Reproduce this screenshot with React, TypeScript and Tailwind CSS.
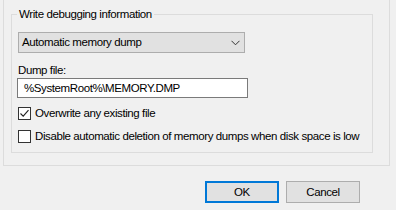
import React from 'react';

const Check = ({ checked }: { checked?: boolean }) => (
  <span className="flex h-[13px] w-[13px] shrink-0 items-center justify-center border border-[#333333] bg-white">
    {checked && (
      <svg width="11" height="11" viewBox="0 0 11 11">
        <path d="M1.5 5.5 L4.2 8.2 L9.5 2.2" fill="none" stroke="#222" strokeWidth="1.1" />
      </svg>
    )}
  </span>
);

export default function App() {
  return (
    <div className="h-[210px] w-[396px] overflow-hidden whitespace-nowrap bg-[#f0f0f0] text-[11.5px] leading-[15px] tracking-[-0.4px] text-black [font-family:'Liberation_Sans',Arial,sans-serif]">
      {/* Outer frame */}
      <div className="ml-[3px] h-[166px] w-[387px] border-x border-b border-[#dcdcdc] pl-[7px] pt-[14px]">
        {/* Group box */}
        <div className="relative flex h-[139px] w-[362px] flex-col border border-[#dcdcdc] pl-[6px]">
          <span className="absolute -top-[8px] left-[5px] bg-[#f0f0f0] px-[2px]">Write debugging information</span>

          <div className="mt-[17px] flex h-[21px] w-[227px] items-center justify-between border border-[#adadad] bg-[#e1e1e1] pl-[3px] pr-[4px]">
            <span>Automatic memory dump</span>
            <svg width="9" height="6" viewBox="0 0 9 6">
              <path d="M0.5 0.8 L4.5 4.8 L8.5 0.8" fill="none" stroke="#333" strokeWidth="1" />
            </svg>
          </div>

          <div className="mt-[10px]">Dump file:</div>
          <div className="-ml-[1px] flex h-[20px] w-[231px] items-center border border-[#7a7a7a] bg-white pl-[6px]">
            %SystemRoot%\MEMORY.DMP
          </div>

          <label className="mt-[8px] flex items-center gap-[4px]">
            <Check checked />
            <span>Overwrite any existing file</span>
          </label>
          <label className="mt-[8px] flex items-center gap-[4px]">
            <Check />
            <span>Disable automatic deletion of memory dumps when disk space is low</span>
          </label>
        </div>
      </div>

      <div className="mt-[15px] flex justify-end gap-[7px] pr-[36px]">
        <button className="flex h-[22px] w-[74px] items-center justify-center border-2 border-[#0078d7] bg-[#e1e1e1]">
          OK
        </button>
        <button className="flex h-[22px] w-[74px] items-center justify-center border border-[#adadad] bg-[#e1e1e1]">
          Cancel
        </button>
      </div>
    </div>
  );
}
